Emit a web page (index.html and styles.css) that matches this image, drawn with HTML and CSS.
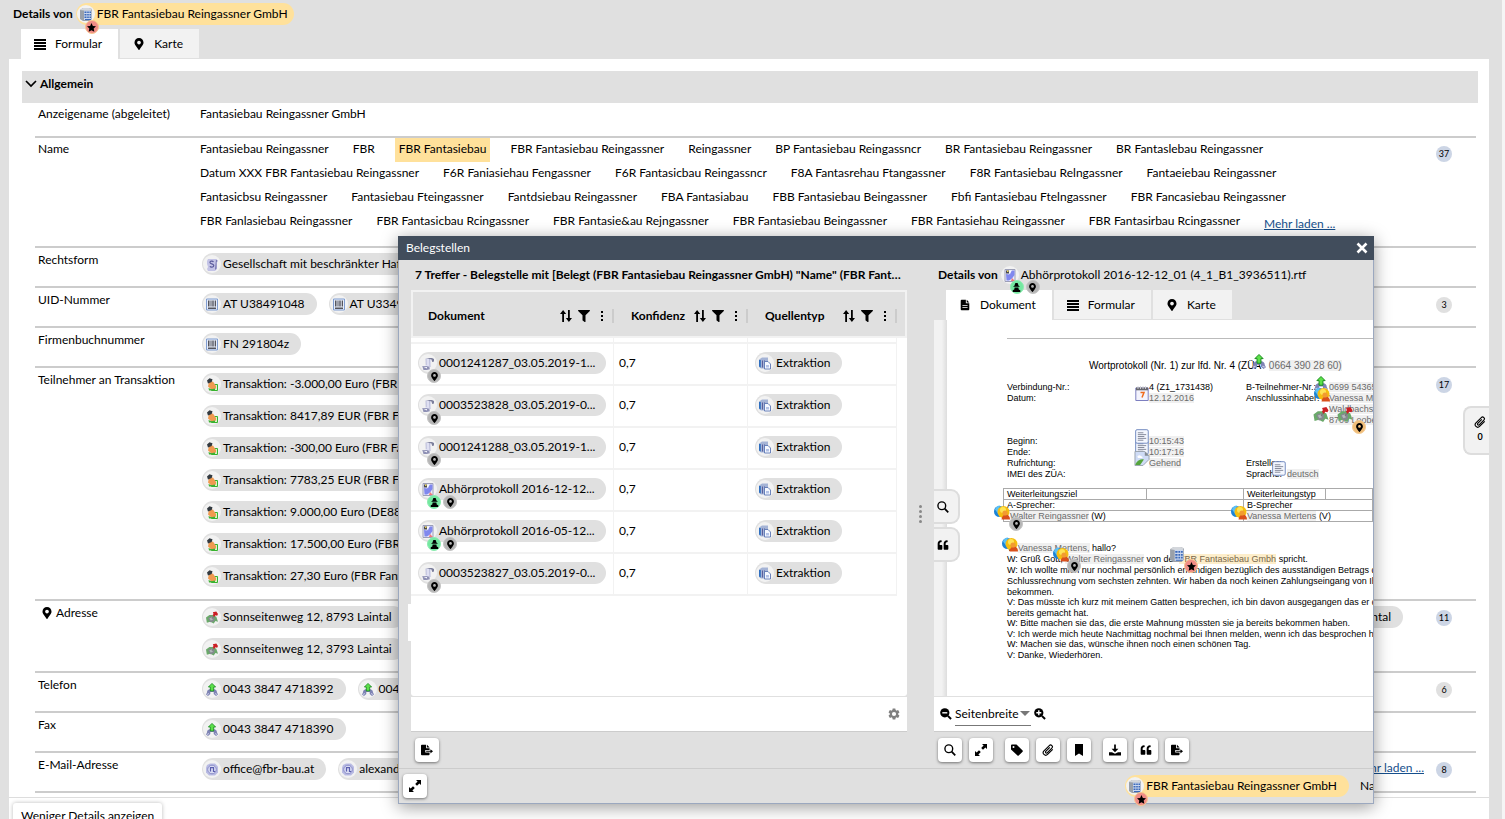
FILE: index.html
```html
<!DOCTYPE html>
<html lang="de">
<head>
<meta charset="utf-8">
<title>Details von FBR Fantasiebau Reingassner GmbH</title>
<link rel="stylesheet" href="styles.css">
</head>
<body>
<svg class="sprite" aria-hidden="true">
  <symbol id="pin" viewBox="0 0 384 512"><path d="M172.268 501.67C26.97 291.031 0 269.413 0 192 0 85.961 85.961 0 192 0s192 85.961 192 192c0 77.413-26.97 99.031-172.268 309.67-9.535 13.774-29.93 13.773-39.464 0zM192 272c44.183 0 80-35.817 80-80s-35.817-80-80-80-80 35.817-80 80 35.817 80 80 80z"/></symbol>
  <symbol id="star" viewBox="0 0 16 16"><path d="M8 0l2.400 5.200 5.600.7-4.100 3.900 1.100 5.700L8 12.700 3 15.500l1.100-5.700L0 5.900l5.600-.7z"/></symbol>
  <symbol id="agent" viewBox="0 0 12 12"><path d="M4.500 0h3L9 4H3zM2 4.200h8v1.200H2zM3.500 6h5L9 8.500l2 1V12H1V9.500l2-1z"/></symbol>
  <symbol id="list" viewBox="0 0 12 12"><path d="M0 1h12v2H0zM0 4h12v2H0zM0 7h12v2H0zM0 10h12v2H0z"/></symbol>
  <symbol id="file" viewBox="0 0 12 14"><path fill-rule="evenodd" d="M2 1h5v4h4v7a1 1 0 0 1-1 1H2a1 1 0 0 1-1-1V2a1 1 0 0 1 1-1zm1 6v1h6V7zm0 2.500v1h6v-1zM8 1l3 3H8z"/></symbol>
  <symbol id="chevron" viewBox="0 0 12 8"><path d="M1 1l5 5 5-5" fill="none" stroke="#000" stroke-width="1.700"/></symbol>
  <symbol id="sort" viewBox="0 0 12 12"><path d="M2.200 12V4H0l3.100-4 3.100 4H4v8zM8 0h1.800v8H12l-3.100 4-3.100-4H8z"/></symbol>
  <symbol id="filter" viewBox="0 0 512 512"><path d="M487.976 0H24.028C2.710 0-8.047 25.866 7.058 40.971L192 225.941V432c0 7.831 3.821 15.170 10.237 19.662l80 55.980C298.020 518.690 320 507.493 320 487.980V225.941l184.947-184.970C520.021 25.896 509.338 0 487.976 0z"/></symbol>
  <symbol id="dots" viewBox="0 0 4 12"><path d="M1 1h2v2H1zM1 5h2v2H1zM1 9h2v2H1z"/></symbol>
  <symbol id="gear" viewBox="0 0 24 24"><path d="M19.140 12.940c.04-.3.060-.61.060-.94 0-.32-.02-.64-.07-.94l2.030-1.580a.49.49 0 0 0 .12-.61l-1.920-3.320a.488.488 0 0 0-.59-.22l-2.390.96c-.5-.38-1.030-.7-1.620-.94l-.36-2.540a.484.484 0 0 0-.48-.41h-3.840c-.24 0-.43.17-.47.41l-.36 2.540c-.59.24-1.130.57-1.620.94l-2.390-.96c-.22-.08-.47 0-.59.22L2.740 8.870c-.12.21-.08.47.12.61l2.030 1.580c-.05.3-.09.63-.09.94s.02.64.07.94l-2.030 1.580a.49.49 0 0 0-.12.61l1.920 3.320c.12.22.37.29.59.22l2.390-.96c.5.38 1.030.7 1.620.94l.36 2.540c.05.24.24.41.48.41h3.840c.24 0 .44-.17.47-.41l.36-2.540c.59-.24 1.130-.56 1.620-.94l2.390.96c.22.08.47 0 .59-.22l1.920-3.320c.12-.22.07-.47-.12-.61zM12 15.600a3.600 3.600 0 1 1 0-7.200 3.600 3.600 0 0 1 0 7.200z"/></symbol>
  <symbol id="export" viewBox="0 0 14 14"><path d="M0 2a1 1 0 0 1 1-1h5v4h4v2H5v3h5v2a1 1 0 0 1-1 1H1a1 1 0 0 1-1-1zM7 1l3 3H7z"/><path d="M6 8h5V6l3 2.500L11 11V9H6z"/></symbol>
  <symbol id="expand" viewBox="0 0 12 12"><path d="M7 0h5v5l-1.600-1.600L8 5.800 6.200 4l2.400-2.400zM0 7l1.600 1.600L4 6.200 5.800 8l-2.400 2.400L5 12H0z"/></symbol>
  <symbol id="search" viewBox="0 0 13 13"><circle cx="5.200" cy="5.200" r="4.200" fill="none" stroke="#000" stroke-width="1.500"/><path d="M8.300 8.300l3.900 3.900" stroke="#000" stroke-width="1.900"/></symbol>
  <symbol id="tag" viewBox="0 0 12 12"><path fill-rule="evenodd" d="M0 1.500A1 1 0 0 1 1 .5h4.500L11.600 6.500a.9.9 0 0 1 0 1.200l-3.900 3.900a.9.9 0 0 1-1.200 0L0 5.500zM2.500 2a1 1 0 1 0 0 2 1 1 0 0 0 0-2z"/></symbol>
  <symbol id="clip" viewBox="0 0 14 14"><path d="M12.500 6.200l-6 6a2.900 2.900 0 0 1-4.200-4.200l6.200-6.200a2 2 0 0 1 3 3l-5.500 5.500a1.100 1.100 0 0 1-1.600-1.600l4.700-4.700" fill="none" stroke="#000" stroke-width="1.300"/></symbol>
  <symbol id="bookmark" viewBox="0 0 10 12"><path d="M1 0h8v12L5 9.500 1 12z"/></symbol>
  <symbol id="download" viewBox="0 0 14 13"><path d="M6 0h2v5h3L7 9 3 5h3zM0 9h3.500L7 11l3.500-2H14v4H0z"/></symbol>
  <symbol id="quote" viewBox="-32 -32 576 576"><path d="M464 256h-80v-64c0-35.300 28.700-64 64-64h8c13.300 0 24-10.700 24-24V56c0-13.300-10.700-24-24-24h-8c-88.400 0-160 71.600-160 160v240c0 26.500 21.500 48 48 48h128c26.500 0 48-21.500 48-48V304c0-26.500-21.500-48-48-48zm-288 0H96v-64c0-35.300 28.700-64 64-64h8c13.300 0 24-10.700 24-24V56c0-13.300-10.700-24-24-24h-8C71.600 32 0 103.600 0 192v240c0 26.500 21.500 48 48 48h128c26.500 0 48-21.500 48-48V304c0-26.500-21.500-48-48-48z"/></symbol>
  <symbol id="minus" viewBox="0 0 13 13"><circle cx="5.200" cy="5.200" r="5"/><path d="M2.500 5.200h5.400" stroke="#fff" stroke-width="1.500"/><path d="M8.500 8.500l3.500 3.500" stroke="#000" stroke-width="2.200"/></symbol>
  <symbol id="plus" viewBox="0 0 13 13"><circle cx="5.200" cy="5.200" r="5"/><path d="M2.500 5.200h5.400M5.200 2.500v5.400" stroke="#fff" stroke-width="1.500"/><path d="M8.500 8.500l3.500 3.500" stroke="#000" stroke-width="2.200"/></symbol>
  <symbol id="close" viewBox="0 0 12 12"><path d="M1.500 1.500l9 9M10.500 1.500l-9 9" stroke="#fff" stroke-width="2.600"/></symbol>

  <symbol id="building" viewBox="0 0 12 13"><path d="M0 2l3-2h6l3 1v10l-2 2H3l-3-2z" fill="#9aa0a8"/><path d="M0 2l3-2h6l3 1-1 1.500H4z" fill="#d4d7dc"/><path d="M4 2.500h7.500V12H4z" fill="#c9d6ee"/><path d="M4.500 3.500h2v1.500h-2zM7.200 3.500h1.600v1.500H7.200zM9.500 3.500H11v1.500H9.500zM4.500 6h2v1.500h-2zM7.200 6h1.600v1.500H7.200zM9.500 6H11v1.500H9.500zM4.500 8.500h2V10h-2zM7.200 8.500h1.600V10H7.200zM9.500 8.500H11V10H9.500zM5 11h6v1H5z" fill="#3a68b8"/></symbol>
  <symbol id="law" viewBox="0 0 12 13"><path d="M2 1h8l2 1.500-1 2V11l-2 2H2L1 11l1-2L1 6V3z" fill="#c3c3e6"/><path d="M10 1.500l1.500 1.500-1 1v6.500L9 12z" fill="#7272ac"/><path d="M7.500 4c-1-1.400-3.800-1-3.500.6.300 1.500 3.800 1.200 3.800 3C7.800 9.500 4.500 9.600 4 8.300" fill="none" stroke="#5c5c9c" stroke-width="1.200"/></symbol>
  <symbol id="barcode" viewBox="0 0 12 12"><path d="M.5.500h11v11H.5z" fill="#e8eefa" stroke="#7f9cd0"/><path d="M2 2h1.500v6H2zM4.500 2h1v6h-1zM6.300 2h1.400v6H6.300zM8.700 2H10v6H8.700zM2 9h8v1.500H2z" fill="#55555d"/></symbol>
  <symbol id="money" viewBox="0 0 12 13"><path d="M5.500 6.500h6v6h-6z" fill="#d8f4c8" stroke="#35b52c"/><path d="M3 4l4-.5 3 4.500v2.500L5.500 11.500 2 8.500z" fill="#f09a50"/><path d="M1 2.500L3.500.3 6.500 1.200 5.700 4 2 5.500z" fill="#333a40"/><path d="M2.500 10l3 1.300 3.500-.8v2H3z" fill="#3fb033"/></symbol>
  <symbol id="address" viewBox="0 0 14 14"><path d="M0 7l4-3 4 0 4 2 2 6-3-1-2 3-4-2-4 1z" fill="#6aa96a"/><path d="M2.500 7.500l4-2 3.500 2-.5 4-4.500 1z" fill="#858a8f"/><path d="M4 8l3-1 1 2.500-2.500 1z" fill="#b4b8bc"/><path d="M10 4l-3 4.500" stroke="#777"/><path d="M8 1l4-1 2 3-1 2-2-.5L9.500 6.500 7.800 4l1-1z" fill="#cb1f25"/></symbol>
  <symbol id="phone" viewBox="0 0 12 13"><path d="M1 9.500C1 6.500 3.500 6 6 6s5 .5 5 3.500l1 2-2 1.500-2.300-2v-2H4.300v2L2 13l-2-1.500z" fill="#7e83b4"/><path d="M1 11.500l2-1M11 11.500l-2-1" stroke="#c9cce4"/><path d="M6 .4L9.600 4H7.700v4H4.300V4H2.400z" fill="#5de04a" stroke="#14881a" stroke-width=".8"/></symbol>
  <symbol id="mail" viewBox="0 0 12 12"><path d="M1 1.500L4 0h5l3 3v6l-3 3H3L0 9V4z" fill="#b9bbe3"/><circle cx="6" cy="6" r="4.300" fill="#d9dbf3" stroke="#8588c4" stroke-width=".9"/><path d="M4.500 8V4.200h3V8h1.700" fill="none" stroke="#5b5fae" stroke-width="1.200"/></symbol>
  <symbol id="scroll" viewBox="0 0 12 13"><path d="M4 1.500h5L8.500 10l-4 1H1.500L4 8z" fill="#dfe0f2"/><path d="M4 1.500L4.200 8M7.500 2L8 10" fill="none" stroke="#b0b2d0" stroke-width=".8"/><path d="M4 1h6l2 1v2.500l-1.800.5L9.500 2.500z" fill="#7c7f9c"/><path d="M.3 9h4l3 .8.500 2.500-3 .7H1.500z" fill="#8e90b4"/><path d="M1 9.800l4 .2v1.600z" fill="#f4f4fc"/></symbol>
  <symbol id="protocol" viewBox="0 0 12 13"><path d="M1 .5h10v12H1z" fill="#e9ebf8" stroke="#9c9fb8"/><path d="M2 5l3 .5L8 1.500h2.500V6L8 9.500 5 11.500H2.500z" fill="#8088ee"/><path d="M5 3l2-1.500-1 4z" fill="#fff"/><path d="M2 1.500h3v3H2z" fill="#4a4a52"/><path d="M3 1.500h1.500V3H3z" fill="#e8cf4c"/><path d="M8 9l3 3H7z" fill="#f07a7a"/></symbol>
  <symbol id="extract" viewBox="0 0 12 12"><path d="M0 2l3-2h6v11H2L0 9.500z" fill="#a5b4d6"/><path d="M0 2.500h1.800V10L0 9z" fill="#2f6fc0"/><path d="M3 3h1v7H3zM5 3h1v3H5z" fill="#5a5f9c"/><path d="M5.500 4h3.500l2.500 2.500v5h-6z" fill="#f5f8ff" stroke="#5c77b4" stroke-width=".9"/><path d="M7 7.500h3V10H7z" fill="#b3c2e6"/></symbol>
  <symbol id="person" viewBox="0 0 16 14"><circle cx="5.500" cy="6" r="5.500" fill="#1b84d8"/><path d="M1 4a5.500 5.500 0 0 1 5-4l-2 8z" fill="#5cc0f4"/><circle cx="9.500" cy="6.500" r="6" fill="#f5bd10"/><circle cx="9" cy="4.500" r="3" fill="#fde455"/><path d="M7.500 14c.5-3.500 2-5 4.500-5 2.500 0 4 2 4 5z" fill="#d9501c"/><circle cx="11" cy="7.500" r="2.600" fill="#f29b31"/></symbol>
  <symbol id="calendar" viewBox="0 0 14 15"><path d="M.8 2h12.400v12.500H.8z" fill="#f3f3fd" stroke="#7d7fc0"/><path d="M1 1.500h12v2.800H1z" fill="#66666e"/><path d="M3 0v3M5.500 0v3M8 0v3M10.500 0v3" stroke="#d5d5da" stroke-width=".9"/><path d="M5.500 6.500H9L7 11.500" fill="none" stroke="#f06a1c" stroke-width="1.500"/></symbol>
  <symbol id="note" viewBox="0 0 15 16"><rect x=".7" y=".7" width="13.500" height="14.500" rx="1.500" fill="#f4f7fe" stroke="#6d85bd"/><path d="M3 4h6M3 6h9M3 8h7M3 10h9M3 12h6" stroke="#63697c" stroke-width=".8"/></symbol>
  <symbol id="broken" viewBox="0 0 16 16"><path d="M.5.500h10.500l4.500 4.500V9L9 15.500H.5z" fill="#cfdcf6" stroke="#98a2ac"/><path d="M1 14c2-4 6-6 9-5l-4 6H1z" fill="#55a53c"/><path d="M3 6.500c0-2 3-3 4-1 2 0 2 2 1 2H4z" fill="#fff"/><path d="M11 .5V5h4.500z" fill="#848c94"/></symbol>
</svg>

<main class="page">
  <header class="titlebar">
    <h1 class="titlebar__label">Details von</h1>
    <a href="#" class="chip chip--gold chip--tight"><span class="chip__icon"><svg><use href="#building"/></svg></span>FBR Fantasiebau Reingassner GmbH<span class="marks"><span class="mark mark--red"><svg><use href="#star"/></svg></span></span></a>
  </header>
  <nav class="tabs" role="tablist">
    <button class="tab tab--active" role="tab" aria-selected="true"><svg><use href="#list"/></svg>Formular</button>
    <button class="tab" role="tab"><svg><use href="#pin"/></svg>Karte</button>
  </nav>

  <section class="panel">
    <div class="panel__scroll">
      <h2 class="section"><svg><use href="#chevron"/></svg>Allgemein</h2>
      <div class="rows">
        <div class="row row--text"><div class="row__label">Anzeigename (abgeleitet)</div><div class="row__body"><div class="names"><span>Fantasiebau Reingassner GmbH</span></div></div></div>
        <div class="row row--names"><div class="row__label">Name</div>
          <div class="row__body">
            <div class="names"><span>Fantasiebau Reingassner</span><span>FBR</span><span class="hit">FBR Fantasiebau</span><span>FBR Fantasiebau Reingassner</span><span>Reingassner</span><span>BP Fantasiebau Reingassncr</span><span>BR Fantasiebau Reingassner</span><span>BR Fantaslebau Reingassner</span></div>
            <div class="names"><span>Datum XXX FBR Fantasiebau Reingassner</span><span>F6R Faniasiehau Fengassner</span><span>F6R Fantasicbau Reingassncr</span><span>F8A Fantasrehau Ftangassner</span><span>F8R Fantasiebau Relngassner</span><span>Fantaeiebau Reingassner</span></div>
            <div class="names"><span>Fantasicbsu Reingassner</span><span>Fantasiebau Fteingassner</span><span>Fantdsiebau Reingassner</span><span>FBA Fantasiabau</span><span>FBB Fantasiebau Beingassner</span><span>Fbfi Fantasiebau Ftelngassner</span><span>FBR Fancasiebau Reingassner</span></div>
            <div class="names"><span>FBR Fanlasiebau Reingassner</span><span>FBR Fantasicbau Rcingassner</span><span>FBR Fantasie&amp;au Rejngassner</span><span>FBR Fantasiebau Beingassner</span><span>FBR Fantasiehau Reingassner</span><span>FBR Fantasirbau Rcingassner</span><a href="#" class="more">Mehr laden ...</a></div>
          </div><span class="count count--blue">37</span></div>
        <div class="row"><div class="row__label">Rechtsform</div><div class="row__body chips"><a href="#" class="chip"><span class="chip__icon"><svg><use href="#law"/></svg></span>Gesellschaft mit beschränkter Haftung</a></div></div>
        <div class="row"><div class="row__label">UID-Nummer</div><div class="row__body chips"><a href="#" class="chip"><span class="chip__icon"><svg><use href="#barcode"/></svg></span>AT U38491048</a><a href="#" class="chip"><span class="chip__icon"><svg><use href="#barcode"/></svg></span>AT U33491048</a></div><span class="count">3</span></div>
        <div class="row"><div class="row__label">Firmenbuchnummer</div><div class="row__body chips"><a href="#" class="chip"><span class="chip__icon"><svg><use href="#barcode"/></svg></span>FN 291804z</a></div></div>
        <div class="row row--list"><div class="row__label">Teilnehmer an Transaktion</div>
          <div class="row__body chips chips--stack">
            <a href="#" class="chip"><span class="chip__icon"><svg><use href="#money"/></svg></span>Transaktion: -3.000,00 Euro (FBR Fantasiebau)</a>
            <a href="#" class="chip"><span class="chip__icon"><svg><use href="#money"/></svg></span>Transaktion: 8417,89 EUR (FBR Fantasiebau)</a>
            <a href="#" class="chip"><span class="chip__icon"><svg><use href="#money"/></svg></span>Transaktion: -300,00 Euro (FBR Fantasiebau)</a>
            <a href="#" class="chip"><span class="chip__icon"><svg><use href="#money"/></svg></span>Transaktion: 7783,25 EUR (FBR Fantasiebau)</a>
            <a href="#" class="chip"><span class="chip__icon"><svg><use href="#money"/></svg></span>Transaktion: 9.000,00 Euro (DE88)</a>
            <a href="#" class="chip"><span class="chip__icon"><svg><use href="#money"/></svg></span>Transaktion: 17.500,00 Euro (FBR Fantasiebau)</a>
            <a href="#" class="chip"><span class="chip__icon"><svg><use href="#money"/></svg></span>Transaktion: 27,30 Euro (FBR Fantasiebau)</a>
          </div><span class="count count--blue">17</span></div>
        <div class="row"><div class="row__label row__label--pin"><svg><use href="#pin"/></svg>Adresse</div>
          <div class="row__body chips chips--stack">
            <div class="chips chips--spread"><a href="#" class="chip"><span class="chip__icon"><svg><use href="#address"/></svg></span>Sonnseitenweg 12, 8793 Laintal</a><a href="#" class="chip"><span class="chip__icon"><svg><use href="#address"/></svg></span>Laintal</a></div>
            <a href="#" class="chip"><span class="chip__icon"><svg><use href="#address"/></svg></span>Sonnseitenweg 12, 3793 Laintai</a>
          </div><span class="count count--blue">11</span></div>
        <div class="row"><div class="row__label">Telefon</div><div class="row__body chips"><a href="#" class="chip"><span class="chip__icon"><svg><use href="#phone"/></svg></span>0043 3847 4718392</a><a href="#" class="chip"><span class="chip__icon"><svg><use href="#phone"/></svg></span>0043 3847 4718391</a></div><span class="count">6</span></div>
        <div class="row"><div class="row__label">Fax</div><div class="row__body chips"><a href="#" class="chip"><span class="chip__icon"><svg><use href="#phone"/></svg></span>0043 3847 4718390</a></div></div>
        <div class="row"><div class="row__label">E-Mail-Adresse</div><div class="row__body chips"><a href="#" class="chip"><span class="chip__icon"><svg><use href="#mail"/></svg></span>office@fbr-bau.at</a><a href="#" class="chip"><span class="chip__icon"><svg><use href="#mail"/></svg></span>alexander@fbr-bau.at</a><a href="#" class="more more--end">Mehr laden ...</a></div><span class="count count--blue">8</span></div>
      </div>
    </div>
    <footer class="panel__foot"><button class="less">Weniger Details anzeigen</button></footer>
  </section>
  <button class="clips" aria-label="Anhänge"><svg><use href="#clip"/></svg>0</button>
</main>

<div class="dialog" role="dialog" aria-label="Belegstellen">
  <header class="dialog__bar"><span>Belegstellen</span><button class="dialog__close" aria-label="Schließen"><svg><use href="#close"/></svg></button></header>
  <div class="dialog__body">
    <section class="hits">
      <h2 class="hits__title">7 Treffer - Belegstelle mit [Belegt (FBR Fantasiebau Reingassner GmbH) "Name" (FBR Fantasiebau)]</h2>
      <div class="hits__grid">
        <table class="table">
          <colgroup><col class="col-doc"><col class="col-conf"><col class="col-type"><col></colgroup>
          <thead><tr>
            <th><div class="th"><span>Dokument</span><button aria-label="Sortieren"><svg><use href="#sort"/></svg></button><button aria-label="Filtern"><svg><use href="#filter"/></svg></button><button aria-label="Menü"><svg><use href="#dots"/></svg></button></div></th>
            <th><div class="th"><span>Konfidenz</span><button aria-label="Sortieren"><svg><use href="#sort"/></svg></button><button aria-label="Filtern"><svg><use href="#filter"/></svg></button><button aria-label="Menü"><svg><use href="#dots"/></svg></button></div></th>
            <th><div class="th"><span>Quellentyp</span><button aria-label="Sortieren"><svg><use href="#sort"/></svg></button><button aria-label="Filtern"><svg><use href="#filter"/></svg></button><button aria-label="Menü"><svg><use href="#dots"/></svg></button></div></th>
            <th></th>
          </tr></thead>
          <tbody>
            <tr class="stub"><td></td><td></td><td></td><td></td></tr>
            <tr><td><a href="#" class="chip chip--doc"><span class="chip__icon"><svg><use href="#scroll"/></svg></span>0001241287_03.05.2019-1...<span class="marks"><span class="mark"><svg><use href="#pin"/></svg></span></span></a></td><td>0,7</td><td><a href="#" class="chip"><span class="chip__icon"><svg><use href="#extract"/></svg></span>Extraktion</a></td><td></td></tr>
            <tr><td><a href="#" class="chip chip--doc"><span class="chip__icon"><svg><use href="#scroll"/></svg></span>0003523828_03.05.2019-0...<span class="marks"><span class="mark"><svg><use href="#pin"/></svg></span></span></a></td><td>0,7</td><td><a href="#" class="chip"><span class="chip__icon"><svg><use href="#extract"/></svg></span>Extraktion</a></td><td></td></tr>
            <tr><td><a href="#" class="chip chip--doc"><span class="chip__icon"><svg><use href="#scroll"/></svg></span>0001241288_03.05.2019-1...<span class="marks"><span class="mark"><svg><use href="#pin"/></svg></span></span></a></td><td>0,7</td><td><a href="#" class="chip"><span class="chip__icon"><svg><use href="#extract"/></svg></span>Extraktion</a></td><td></td></tr>
            <tr><td><a href="#" class="chip chip--doc"><span class="chip__icon"><svg><use href="#protocol"/></svg></span>Abhörprotokoll 2016-12-12...<span class="marks"><span class="mark mark--green"><svg><use href="#agent"/></svg></span><span class="mark"><svg><use href="#pin"/></svg></span></span></a></td><td>0,7</td><td><a href="#" class="chip"><span class="chip__icon"><svg><use href="#extract"/></svg></span>Extraktion</a></td><td></td></tr>
            <tr><td><a href="#" class="chip chip--doc"><span class="chip__icon"><svg><use href="#protocol"/></svg></span>Abhörprotokoll 2016-05-12...<span class="marks"><span class="mark mark--green"><svg><use href="#agent"/></svg></span><span class="mark"><svg><use href="#pin"/></svg></span></span></a></td><td>0,7</td><td><a href="#" class="chip"><span class="chip__icon"><svg><use href="#extract"/></svg></span>Extraktion</a></td><td></td></tr>
            <tr><td><a href="#" class="chip chip--doc"><span class="chip__icon"><svg><use href="#scroll"/></svg></span>0003523827_03.05.2019-0...<span class="marks"><span class="mark"><svg><use href="#pin"/></svg></span></span></a></td><td>0,7</td><td><a href="#" class="chip"><span class="chip__icon"><svg><use href="#extract"/></svg></span>Extraktion</a></td><td></td></tr>
          </tbody>
        </table>
        <span class="notch"></span>
      </div>
      <div class="statusbar statusbar--end"><button class="plain" aria-label="Einstellungen"><svg class="gear"><use href="#gear"/></svg></button></div>
      <div class="toolbar"><button class="tool" aria-label="Exportieren"><svg><use href="#export"/></svg></button></div>
    </section>

    <div class="splitter"><i></i><i></i><i></i><i></i></div>

    <section class="viewer">
      <header class="viewer__head"><h2>Details von</h2><a href="#" class="chip chip--bare"><span class="chip__icon"><svg><use href="#protocol"/></svg></span>Abhörprotokoll 2016-12-12_01 (4_1_B1_3936511).rtf<span class="marks"><span class="mark mark--green"><svg><use href="#agent"/></svg></span><span class="mark"><svg><use href="#pin"/></svg></span></span></a></header>
      <nav class="tabs tabs--inner" role="tablist">
        <button class="tab tab--active" role="tab" aria-selected="true"><svg><use href="#file"/></svg>Dokument</button>
        <button class="tab" role="tab"><svg><use href="#list"/></svg>Formular</button>
        <button class="tab" role="tab"><svg><use href="#pin"/></svg>Karte</button>
      </nav>
      <div class="doc">
        <div class="doc__side"></div>
        <article class="sheet">
          <hr class="sheet__rule">
          <h3 class="sheet__title">Wortprotokoll (Nr. 1) zur lfd. Nr. 4 (ZÜA &nbsp; <mark>0664 390 28 60)</mark></h3>
          <div class="facts">
            <span>Verbindung-Nr.:</span><span>4 (Z1_1731438)</span><span>B-Teilnehmer-Nr.:</span><span><mark>0699 54365</mark></span>
            <span>Datum:</span><span><mark>12.12.2016</mark></span><span>Anschlussinhaber:</span><span><mark>Vanessa Mertens</mark></span>
            <span></span><span></span><span></span><span><mark>Waldbachstr.</mark></span>
            <span></span><span></span><span></span><span><mark>8700 Leoben</mark></span>
          </div>
          <div class="facts facts--times">
            <span>Beginn:</span><span><mark>10:15:43</mark></span><span></span><span></span>
            <span>Ende:</span><span><mark>10:17:16</mark></span><span></span><span></span>
            <span>Rufrichtung:</span><span><mark>Gehend</mark></span><span>Ersteller:</span><span></span>
            <span>IMEI des ZÜA:</span><span></span><span>Sprache: &nbsp;<mark>deutsch</mark></span><span></span>
          </div>
          <table class="parties">
            <colgroup><col class="p1"><col class="p2"><col class="p3"><col></colgroup>
            <tr><td>Weiterleitungsziel</td><td></td><td>Weiterleitungstyp</td><td></td></tr>
            <tr><td colspan="2">A-Sprecher:</td><td colspan="2">B-Sprecher</td></tr>
            <tr><td colspan="2" class="in"><mark>Walter Reingassner</mark> (W)</td><td colspan="2"><mark>Vanessa Mertens</mark> (V)</td></tr>
          </table>
          <div class="talk">
            <p>V: <mark>Vanessa Mertens,</mark> hallo?</p>
            <p>W: Grüß Gott, <mark>Walter Reingassner</mark> von der <mark class="gold">FBR Fantasiebau Gmbh</mark> spricht.</p>
            <p class="long">W: Ich wollte mich nur nochmal persönlich erkundigen bezüglich des ausständigen Betrags der<br>Schlussrechnung vom sechsten zehnten. Wir haben da noch keinen Zahlungseingang von Ihnen<br>bekommen.</p>
            <p class="long">V: Das müsste ich kurz mit meinem Gatten besprechen, ich bin davon ausgegangen das er das<br>bereits gemacht hat.</p>
            <p>W: Bitte machen sie das, die erste Mahnung müssten sie ja bereits bekommen haben.</p>
            <p class="long">V: Ich werde mich heute Nachmittag nochmal bei Ihnen melden, wenn ich das besprochen habe.</p>
            <p>W: Machen sie das, wünsche ihnen noch einen schönen Tag.</p>
            <p>V: Danke, Wiederhören.</p>
          </div>
          <svg class="pic a1"><use href="#phone"/></svg>
          <svg class="pic a2"><use href="#calendar"/></svg>
          <svg class="pic a3"><use href="#phone"/></svg>
          <svg class="pic pic--wide a4"><use href="#person"/></svg>
          <svg class="pic pic--wide a5"><use href="#address"/></svg>
          <svg class="pic pic--wide a6"><use href="#address"/></svg>
          <span class="mark mark--orange a7"><svg><use href="#pin"/></svg></span>
          <svg class="pic a9"><use href="#note"/></svg>
          <svg class="pic a8"><use href="#note"/></svg>
          <svg class="pic pic--wide a10"><use href="#broken"/></svg>
          <svg class="pic a11"><use href="#note"/></svg>
          <svg class="pic pic--wide a12"><use href="#person"/></svg>
          <span class="mark a13"><svg><use href="#pin"/></svg></span>
          <svg class="pic pic--wide a14"><use href="#person"/></svg>
          <svg class="pic pic--wide a15"><use href="#person"/></svg>
          <svg class="pic pic--wide a16"><use href="#person"/></svg>
          <span class="mark a17"><svg><use href="#pin"/></svg></span>
          <svg class="pic a18"><use href="#building"/></svg>
          <span class="mark mark--red a19"><svg><use href="#star"/></svg></span>
        </article>
        <div class="sidekeys"><button aria-label="Suchen"><svg><use href="#search"/></svg></button><button aria-label="Zitate"><svg><use href="#quote"/></svg></button></div>
      </div>
      <div class="statusbar zoom"><button class="plain" aria-label="Verkleinern"><svg><use href="#minus"/></svg></button><div class="zoom__pick"><select aria-label="Zoom"><option>Seitenbreite</option></select></div><button class="plain" aria-label="Vergrößern"><svg><use href="#plus"/></svg></button></div>
      <div class="toolbar">
        <div class="tools"><button class="tool" aria-label="Suchen"><svg><use href="#search"/></svg></button><button class="tool" aria-label="Vollbild"><svg><use href="#expand"/></svg></button></div>
        <div class="tools"><button class="tool" aria-label="Markieren"><svg><use href="#tag"/></svg></button><button class="tool" aria-label="Anhängen"><svg><use href="#clip"/></svg></button><button class="tool" aria-label="Lesezeichen"><svg><use href="#bookmark"/></svg></button></div>
        <div class="tools"><button class="tool" aria-label="Herunterladen"><svg><use href="#download"/></svg></button><button class="tool" aria-label="Zitieren"><svg><use href="#quote"/></svg></button><button class="tool" aria-label="Exportieren"><svg><use href="#export"/></svg></button></div>
      </div>
    </section>
  </div>
  <footer class="dialog__foot">
    <button class="tool" aria-label="Maximieren"><svg><use href="#expand"/></svg></button>
    <div class="crumbs"><a href="#" class="chip chip--gold"><span class="chip__icon"><svg><use href="#building"/></svg></span>FBR Fantasiebau Reingassner GmbH<span class="marks"><span class="mark mark--red"><svg><use href="#star"/></svg></span></span></a><span class="crumbs__next">Name</span></div>
  </footer>
</div>
</body>
</html>
```
FILE: styles.css
```css
* { box-sizing: border-box; }
body {
  margin: 0;
  height: 100vh;
  overflow: hidden;
  position: relative;
  background: #f5f5f5;
  color: #000;
  font: 12px/20px Lato, sans-serif;
}
h1, h2, h3, p { margin: 0; font-size: inherit; }
a { color: inherit; text-decoration: none; }
button { border: 0; padding: 0; background: none; font: inherit; color: inherit; display: flex; align-items: center; justify-content: center; }
svg { display: block; flex: none; width: 12px; height: 12px; }
.sprite { position: absolute; width: 0; height: 0; }

.page { position: relative; display: flex; flex-direction: column; height: 100%; margin-right: 3px; background: #e0e0e0; }
.titlebar { display: flex; align-items: center; gap: 3px; height: 29px; padding: 0 13px 1px; }

.chip { position: relative; display: inline-flex; align-items: center; gap: 2px; height: 22px; padding: 0 12px 0 1px; border-radius: 11px; background: #e0e0e0; white-space: nowrap; line-height: 22px; }
.chip__icon { display: flex; align-items: center; justify-content: center; flex: none; width: 18px; height: 18px; border-radius: 50%; background: #f2f2f2; }
.chip__icon svg { width: 12px; height: 13px; }
.chip--gold { background: #ffe19b; }
.chip--tight { padding-right: 6px; }
.chip--bare { padding-left: 0; }
.chip--doc { display: flex; padding-right: 0; }
.marks { position: absolute; left: 9px; top: 17px; display: flex; gap: 2px; }
.mark { display: flex; align-items: center; justify-content: center; width: 14px; height: 14px; border-radius: 50%; background: #b5b5b5; border: 1px solid #c4c4c4; }
.mark svg { width: 9px; height: 9px; }
.mark--red { background: #f08c86; border-color: #f8c690; }
.mark--green { background: #73e8a0; border-color: #8cecb0; }
.mark--orange { background: #f0bd78; border-color: #f4cc96; }

.tabs { display: flex; align-items: flex-start; gap: 2px; height: 30px; padding-left: 21px; }
.tab { gap: 9px; height: 29px; padding: 0 16px 0 13px; background: #f2f2f2; }
.tab--active { height: 30px; background: #fff; }

.panel { display: flex; flex: 1; flex-direction: column; min-height: 0; margin: 0 13px 0 9px; background: #fff; }
.panel__scroll { padding: 12px 11px 4px 13px; }
.section { display: flex; gap: 3px; height: 32px; padding: 3px; background: #e0e0e0; }
.section svg { width: 12px; height: 20px; }
.rows { margin: 0 2px 0 13px; }
.row { display: flex; border-bottom: 2px solid #ccc; padding: 5px 24px 11px 0; }
.row--text, .row--names { padding-top: 0; }
.row--text { padding-bottom: 9px; }
.row--names { padding-bottom: 12px; }
.row--list { padding-bottom: 12px; }
.row__label { width: 165px; flex: none; padding-left: 3px; margin-top: -3px; height: 20px; }
.row--text .row__label, .row--names .row__label { margin-top: 1px; }
.row__label--pin { display: flex; align-items: center; gap: 3px; padding-left: 6px; }
.row__body { flex: 1; min-width: 0; }
.names { display: flex; gap: 16px; height: 24px; margin-left: -4px; line-height: 22px; white-space: nowrap; }
.names > * { padding: 0 4px; }
.hit { background: #ffe19b; }
.more { color: #164f8c; text-decoration: underline; }
.names .more { line-height: 28px; }
.more--end { margin-left: auto; margin-right: 12px; }
.chips { display: flex; gap: 10px 12px; padding-left: 2px; }
.chips--stack { flex-direction: column; align-items: flex-start; }
.chips--spread { align-self: stretch; justify-content: space-between; padding: 0 33px 0 0; }
.count { flex: none; width: 16px; height: 16px; margin-top: 4px; border-radius: 50%; background: #e0e0e0; font-size: 9px; line-height: 16px; text-align: center; }
.row--names .count { margin-top: 8px; }
.count--blue { background: #ccd5e5; }
.panel__foot { flex: 1; border-top: 1px solid #ddd; padding: 5px 4px 0; }
.less { height: 25px; padding: 0 8px; border-radius: 3px; box-shadow: 0 0 4px #bbb; }
.clips { position: absolute; right: 13px; top: 406px; flex-direction: column; width: 26px; height: 49px; padding-left: 6px; border: 2px solid #ddd; border-right: 0; border-radius: 8px 0 0 8px; background: #f2f2f2; font-size: 9px; font-weight: bold; line-height: 18px; }

.dialog { position: absolute; left: 398px; right: 131px; top: 236px; bottom: 15px; display: flex; flex-direction: column; overflow: visible; border: 1px solid #9ba8bf; border-top: 0; background: #e0e0e0; box-shadow: 0 3px 16px rgba(0, 0, 0, .4); }
.dialog__bar { display: flex; flex: none; align-items: center; justify-content: space-between; height: 24px; margin: 0 -1px; padding: 0 6px 0 8px; background: #414d5c; color: #fff; }
.dialog__body { display: flex; flex: 1; min-height: 0; }
.hits { display: flex; flex: none; flex-direction: column; width: 508px; padding-left: 12px; }
.hits__title { height: 30px; padding: 0 4px; line-height: 30px; overflow: hidden; text-overflow: ellipsis; white-space: nowrap; }
.hits__grid { position: relative; flex: 1; border-radius: 3px; background: #fff; }
.notch { position: absolute; left: -3px; bottom: 55px; width: 3px; height: 37px; background: #fff; }
.table { width: 100%; table-layout: fixed; border-collapse: separate; border-spacing: 0; }
.col-doc { width: 203px; }
.col-conf { width: 134px; }
.col-type { width: 149px; }
.table th { height: 48px; padding: 0; border: solid #f2f2f2; border-width: 2px 0; background: #e0e0e0; text-align: left; }
.table th:first-child { border-left-width: 2px; }
.table th:last-child { border-right-width: 2px; }
.th { display: flex; align-items: center; gap: 6px; height: 14px; padding: 0 4px 0 17px; border-right: 2px solid #ccc; margin-top: 4px; }
.table th:first-child .th { padding-left: 15px; }
.th span { flex: 1; }
.table td { height: 42px; padding: 0 7px 2px; border-bottom: 2px solid #f2f2f2; border-right: 1px solid #f2f2f2; }
.table td:nth-child(2) { padding: 0 5px 2px; }
.table td:last-child { border: 0; }
.table .stub td { height: 6px; }
.table .chip { vertical-align: middle; }
.statusbar { display: flex; flex: none; align-items: center; height: 36px; padding: 0 6px; border-top: 1px solid #e0e0e0; border-bottom: 1px solid #ccc; background: #fff; }
.statusbar--end { justify-content: flex-end; }
.gear { width: 14px; height: 14px; fill: #808080; }
.toolbar { display: flex; flex: none; gap: 12px; height: 36px; padding: 6px 4px; }
.tools { display: flex; gap: 7px; }
.tool { width: 24px; height: 24px; border-radius: 4px; background: #fff; box-shadow: 0 1px 3px rgba(0, 0, 0, .5); }
.tool svg { width: 12px; height: 12px; }
.splitter { display: flex; flex: none; flex-direction: column; justify-content: center; align-items: center; gap: 2px; width: 27px; }
.splitter i { width: 3px; height: 3px; border-radius: 50%; background: #888; }

.viewer { display: flex; flex: 1; flex-direction: column; min-width: 0; }
.viewer__head { display: flex; align-items: center; gap: 3px; height: 30px; padding-left: 4px; }
.viewer__head .marks { top: 16px; }
.tabs--inner { padding-left: 12px; }
.viewer .tabs { flex: none; }
.doc { position: relative; display: flex; flex: 1; min-height: 0; overflow: hidden; }
.doc__side { flex: none; width: 13px; background: linear-gradient(90deg, #f2f2f2 60%, #ddd); }
.sheet { position: relative; flex: 1; min-width: 0; overflow: hidden; padding: 18px 0 0 60px; background: #fff; font: 9px/11px "Liberation Sans", Arial, sans-serif; white-space: nowrap; }
.sheet mark { background: #f0f0f0; color: #6b6b6b; }
.sheet mark.gold { background: #fdeecb; color: #77664a; }
.sheet__rule { margin: 0; border: 0; border-top: 1px solid #bbb; }
.sheet__title { margin: 21px 0 0 82px; font-size: 10px; font-weight: normal; }
.facts { display: grid; grid-template-columns: 142px 97px 83px 1fr; grid-auto-rows: 11px; margin-top: 11px; }
.facts--times { margin-top: 10px; }
.parties { width: calc(100% + 4px); margin: 8px 0 0 -4px; table-layout: fixed; border-collapse: collapse; }
.p1 { width: 143px; }
.p2 { width: 97px; }
.p3 { width: 82px; }
.parties td { height: 11px; padding: 0 0 0 3px; line-height: 10px; border: 1px solid #aaa; }
.parties .in { padding-left: 6px; }
.talk { margin-top: 21px; }
.long { margin-bottom: -1px; }
.pic { position: absolute; width: 14px; height: 15px; }
.pic--wide { width: 16px; }
.sheet .mark { position: absolute; }
.a1 { left: 305px; top: 34px; }
.a2 { left: 188px; top: 66px; }
.a3 { left: 367px; top: 56px; }
.a4 { left: 367px; top: 67px; }
.a5 { left: 366px; top: 87px; }
.a6 { left: 390px; top: 87px; }
.a7 { left: 405px; top: 100px; }
.a8 { left: 188px; top: 109px; }
.a9 { left: 188px; top: 120px; }
.a10 { left: 187px; top: 131px; }
.a11 { left: 325px; top: 141px; }
.a12 { left: 47px; top: 185px; }
.a13 { left: 62px; top: 197px; }
.a14 { left: 284px; top: 185px; }
.a15 { left: 55px; top: 217px; }
.a16 { left: 106px; top: 227px; }
.a17 { left: 120px; top: 239px; }
.a18 { left: 223px; top: 227px; }
.a19 { left: 237px; top: 239px; }
.sidekeys { position: absolute; left: -1px; top: 169px; display: flex; flex-direction: column; gap: 3px; }
.sidekeys button { width: 27px; height: 35px; padding-right: 6px; border: 2px solid #ddd; border-left: 0; border-radius: 0 9px 9px 0; background: #f2f2f2; }
.zoom { gap: 3px; }
.zoom__pick { position: relative; border-bottom: 1px solid #777; }
.zoom select { appearance: none; width: 76px; height: 23px; border: 0; padding: 0; background: none; font: inherit; }
.zoom__pick::after { content: ""; position: absolute; right: 1px; top: 9px; border: 5px solid transparent; border-top-color: #777; pointer-events: none; }
.dialog__foot { display: flex; flex: none; align-items: center; justify-content: space-between; height: 35px; padding-left: 4px; border-top: 1px solid #ccc; }
.crumbs { display: flex; align-items: center; gap: 11px; }
.crumbs__next { width: 13px; overflow: hidden; white-space: nowrap; }
```
